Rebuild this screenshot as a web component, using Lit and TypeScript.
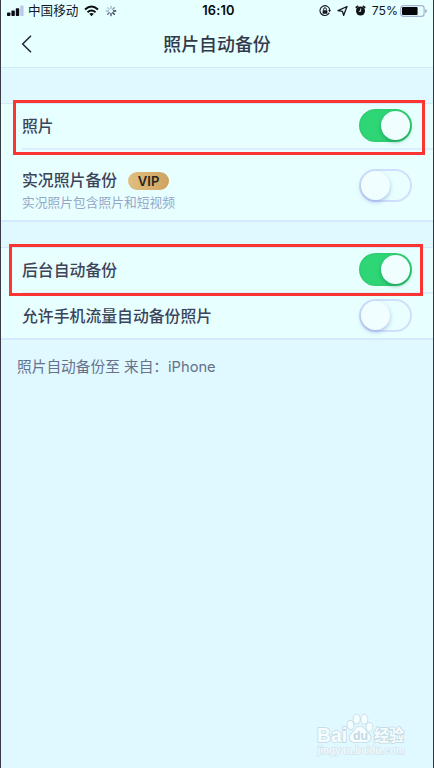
import { LitElement, html, css, svg } from "lit";
import { customElement, property } from "lit/decorators.js";

@customElement("toggle-switch")
class ToggleSwitch extends LitElement {
  @property({ type: Boolean, reflect: true }) on = false;

  static styles = css`
    :host {
      display: flex;
      box-sizing: border-box;
      width: 53px;
      height: 33px;
      border-radius: 17px;
      border: 2px solid #cfe0fc;
      background: #e9ffff;
      flex: none;
    }
    :host([on]) {
      background: #2fd676;
      border-color: #2fd071;
      justify-content: flex-end;
    }
    .knob {
      width: 29px;
      height: 29px;
      border-radius: 50%;
      background: #f0feff;
      box-shadow: 0 2px 4px rgba(110, 130, 205, 0.5);
    }
    :host([on]) .knob {
      box-shadow: 0 2px 4px rgba(0, 95, 60, 0.4);
    }
  `;

  render() {
    return html`<div class="knob"></div>`;
  }
}

@customElement("app-root")
class AppRoot extends LitElement {
  static styles = css`
    :host {
      display: flex;
      flex-direction: column;
      position: relative;
      box-sizing: border-box;
      width: 434px;
      height: 768px;
      overflow: hidden;
      border-left: 1px solid #3a3d45;
      border-right: 1px solid #34383d;
      background: #e0f8ff;
      color: #3c4459;
      font-family: "Liberation Sans", "Noto Sans CJK SC", sans-serif;
      white-space: nowrap;
    }
    svg {
      display: block;
      flex: none;
    }
    .status {
      display: grid;
      grid-template-columns: 1fr auto 1fr;
      align-items: center;
      height: 22px;
      padding: 0 6px;
      background: #e6ffff;
      color: #15171f;
      font-family: Inter, "Noto Sans CJK SC", sans-serif;
      font-size: 12.2px;
      line-height: 22px;
    }
    .left,
    .right {
      display: flex;
      align-items: center;
    }
    .right {
      justify-content: flex-end;
    }
    .carrier {
      margin: 0 6px 0 4px;
      font-size: 12.6px;
    }
    .wifi {
      margin-right: 6px;
    }
    .clock {
      padding-left: 3px;
      font-weight: 600;
      font-size: 12.8px;
      letter-spacing: 0.2px;
      color: #05070a;
    }
    .lock {
      margin-right: 6px;
    }
    .arrow {
      margin-right: 7px;
    }
    .alarm {
      margin-right: 6px;
    }
    .percent {
      margin-right: 2px;
    }
    .nav {
      display: grid;
      grid-template-columns: 40px 1fr 40px;
      align-items: center;
      height: 45px;
      background: #e6ffff;
      border-bottom: 1px solid #cfeafb;
    }
    .back {
      padding-left: 20px;
      margin-top: -2px;
    }
    .title {
      text-align: center;
      font-size: 17.9px;
      line-height: 45px;
      padding-top: 1px;
      font-weight: 500;
      color: #32394a;
    }
    .group {
      background: #e8ffff;
      border-top: 1px solid #d2e9fb;
      border-bottom: 2px solid #d5ebfd;
    }
    .first {
      margin-top: 35px;
    }
    .second {
      margin-top: 25px;
    }
    .row {
      display: flex;
      box-sizing: border-box;
      align-items: center;
      justify-content: space-between;
      height: 44px;
      padding: 0 21px 1px;
      font-size: 15.85px;
      font-weight: 500;
    }
    .divider {
      height: 2px;
      margin-left: 21px;
      background: #daeefe;
    }
    .tall {
      height: 70px;
      padding-bottom: 0;
    }
    .text {
      padding-top: 11px;
    }
    .name {
      display: flex;
      align-items: center;
      height: 24px;
      line-height: 24px;
    }
    .vip {
      width: 41px;
      height: 18px;
      margin-left: 11px;
      border-radius: 9px;
      background: linear-gradient(90deg, #e0bf80, #cfa260);
      color: #28241f;
      font: 600 13px/18px Inter, "Liberation Sans", sans-serif;
      text-align: center;
    }
    .sub {
      height: 20px;
      font-size: 12.75px;
      font-weight: 400;
      line-height: 20px;
      color: #97a6c8;
    }
    .foot {
      margin: 15px 0 0 16px;
      font-family: Inter, "Noto Sans CJK SC", sans-serif;
      font-size: 14.7px;
      line-height: 24px;
      color: #65728a;
      white-space: pre;
    }
    .mark {
      position: absolute;
      box-sizing: border-box;
      border: 3px solid #fc3432;
    }
    .mark-a {
      left: 12px;
      top: 100px;
      width: 412px;
      height: 55px;
    }
    .mark-b {
      left: 8px;
      top: 244px;
      width: 414px;
      height: 52px;
    }
    .watermark {
      position: absolute;
      left: 311px;
      top: 710px;
    }
    .wm {
      fill: #f6fdff;
      stroke: #c2d9e1;
      stroke-width: 1.6px;
      paint-order: stroke;
    }
    .latin {
      font: 700 21px "Liberation Sans", sans-serif;
    }
    .du {
      font: 700 13px "Liberation Sans", sans-serif;
      fill: #c2d9e1;
      stroke: none;
    }
    .han {
      font: 700 15.5px "Noto Sans CJK SC", sans-serif;
    }
    .url {
      font: 700 10.5px "Liberation Sans", sans-serif;
      fill: #f1fbff;
      stroke: #c8dce5;
      stroke-width: 1px;
    }
  `;

  render() {
    return html`
      <div class="status">
        <div class="left">
          <svg width="17" height="12" viewBox="0 0 17 12" fill="#0b0d12">
            <rect x="0" y="7.4" width="3.4" height="3.6" rx="0.8" />
            <rect x="4.4" y="5.6" width="3.4" height="5.4" rx="0.8" />
            <rect x="8.8" y="3.2" width="3.4" height="7.8" rx="0.8" />
            <rect x="13.2" y="0.6" width="3.4" height="10.4" rx="0.8" fill="#b9c9ec" />
          </svg>
          <span class="carrier">中国移动</span>
          <svg class="wifi" width="15" height="12" viewBox="0 0 15 12">
            <g fill="none" stroke="#0b0d12" stroke-width="2">
              <path d="M1 4.4Q7.5-1.4 14 4.4" />
              <path d="M3.5 7.2Q7.5 3.7 11.5 7.2" />
            </g>
            <path d="M5.2 8.8Q7.5 7 9.8 8.8L7.5 11.2Z" fill="#0b0d12" />
          </svg>
          <svg width="12" height="12" viewBox="-6 -6 12 12" stroke-width="1.3" stroke-linecap="round">
            ${["#a9b6d3", "#8793af", "#303746", "#28303d", "#424b5e", "#65718b", "#a2afcf", "#b7c4e2"].map(
              (c, i) => svg`<path d="M0-2.5V-4.7" transform="rotate(${i * 45})" stroke=${c} />`
            )}
          </svg>
        </div>
        <span class="clock">16:10</span>
        <div class="right">
          <svg class="lock" width="12" height="12" viewBox="0 0 12 12">
            <path d="M10.3 7.8A4.9 4.9 0 1 1 10.8 5.2" fill="none" stroke="#15171f" stroke-width="1.1" />
            <path d="M9.2 5h2.8L10.6 7.2Z" fill="#15171f" />
            <rect x="3.6" y="5.2" width="4.8" height="3.6" rx="0.5" fill="#15171f" />
            <path d="M4.6 5.4V4.2a1.4 1.4 0 0 1 2.8 0v1.2" fill="none" stroke="#15171f" stroke-width="1" />
          </svg>
          <svg class="arrow" width="11" height="12" viewBox="0 0 11 12">
            <path d="M10 1.5 6.6 10.4 5.5 6.3 1 5.6Z" fill="none" stroke="#15171f" stroke-width="1.3" stroke-linejoin="round" />
          </svg>
          <svg class="alarm" width="11" height="12" viewBox="0 0 11 12">
            <circle cx="5.5" cy="6" r="4.5" fill="#111318" />
            <path d="M1.3 2.5 2.6 1.4M9.7 2.5 8.4 1.4" stroke="#111318" stroke-width="1.7" stroke-linecap="round" />
            <path d="M5.7 3.5V6.3H3.9" fill="none" stroke="#e6ffff" stroke-width="0.9" />
          </svg>
          <span class="percent">75%</span>
          <svg width="27" height="12" viewBox="0 0 27 12">
            <rect x="0.7" y="0.7" width="23.4" height="10.6" rx="2.6" fill="none" stroke="#a5b4d2" stroke-width="1.2" />
            <rect x="2" y="2" width="15.6" height="8" rx="1" fill="#050609" />
            <path d="M25.3 4v4Q26.8 7.4 26.8 6T25.3 4Z" fill="#8e9dbd" />
          </svg>
        </div>
      </div>
      <div class="nav">
        <div class="back">
          <svg width="12" height="18" viewBox="0 0 12 18">
            <path d="M10 .8 1.7 9 10 17.2" fill="none" stroke="#252b3b" stroke-width="1.6" />
          </svg>
        </div>
        <div class="title">照片自动备份</div>
      </div>

      <div class="group first">
        <div class="row">照片<toggle-switch on></toggle-switch></div>
        <div class="divider"></div>
        <div class="row tall">
          <div class="text">
            <div class="name">实况照片备份<span class="vip">VIP</span></div>
            <div class="sub">实况照片包含照片和短视频</div>
          </div>
          <toggle-switch></toggle-switch>
        </div>
      </div>

      <div class="group second">
        <div class="row">后台自动备份<toggle-switch on></toggle-switch></div>
        <div class="divider"></div>
        <div class="row">允许手机流量自动备份照片<toggle-switch></toggle-switch></div>
      </div>

      <div class="foot">照片自动备份至 来自：iPhone</div>

      <div class="mark mark-a"></div>
      <div class="mark mark-b"></div>

      <svg class="watermark" width="100" height="50" viewBox="0 0 100 50">
        <text class="wm latin" x="5" y="31.5" textLength="30" lengthAdjust="spacingAndGlyphs">Bai</text>
        <g class="wm">
          <ellipse cx="38.5" cy="15" rx="3" ry="4.2" transform="rotate(-12 38.5 15)" />
          <ellipse cx="44.7" cy="9" rx="3.1" ry="4.5" />
          <ellipse cx="52.4" cy="9.3" rx="3.1" ry="4.5" />
          <ellipse cx="57.5" cy="17" rx="3" ry="4" />
          <path d="M48 16.5c-4 0-5 4-8 6.5C36 26.5 37.5 32 42.5 32h11C59 32 60.5 26.5 56 23c-3-2.5-4-6.5-8-6.5Z" />
        </g>
        <text class="du" x="41" y="30" textLength="15" lengthAdjust="spacingAndGlyphs">du</text>
        <text class="wm han" x="62" y="31" textLength="30" lengthAdjust="spacingAndGlyphs">经验</text>
        <text class="wm url" x="5.5" y="43.5" textLength="87" lengthAdjust="spacingAndGlyphs">jingyan.baidu.com</text>
      </svg>
    `;
  }
}
